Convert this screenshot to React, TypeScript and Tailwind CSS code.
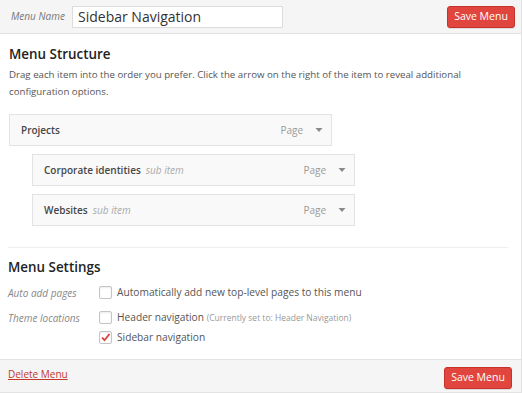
import React from 'react';

const font = { fontFamily: '"Open Sans", "Liberation Sans", sans-serif' };

const Caret: React.FC = () => (
  <svg width="8" height="6" viewBox="0 0 8 6" className="ml-[12px]">
    <path d="M0.5 1 L7.5 1 L4 5 Z" fill="#8a8a8a" />
  </svg>
);

const MenuItem: React.FC<{ title: string; sub?: boolean; className?: string }> = ({ title, sub, className }) => (
  <div className={`flex h-[32px] w-[323px] items-center justify-between border border-[#e3e3e3] bg-[#f9f9f9] pl-[11px] pr-[8px] ${className ?? ''}`}>
    <div className="flex items-baseline">
      <span className="text-[10px] font-semibold text-[#464646]">{title}</span>
      {sub && <span className="ml-[5px] text-[10px] italic text-[#aaa]">sub item</span>}
    </div>
    <div className="flex items-center">
      <span className="text-[10px] text-[#999]">Page</span>
      <Caret />
    </div>
  </div>
);

const Checkbox: React.FC<{ checked?: boolean }> = ({ checked }) => (
  <span className="flex h-[13px] w-[13px] shrink-0 items-center justify-center rounded-[2px] border border-[#c4c4c4] bg-white shadow-[inset_0_1px_2px_rgba(0,0,0,0.08)]">
    {checked && (
      <svg width="11" height="11" viewBox="0 0 11 11">
        <path d="M2 5.5 L4.5 8.2 L9.5 2" fill="none" stroke="#dd3d36" strokeWidth="1.8" />
      </svg>
    )}
  </span>
);

const SaveButton: React.FC = () => (
  <button className="flex h-[22px] w-[68px] items-center justify-center rounded-[3px] border border-[#c9302c] bg-[#e0463d] text-[10.5px] text-white shadow-[0_1px_0_rgba(0,0,0,0.1)]">
    Save Menu
  </button>
);

export default function App() {
  return (
    <div style={font} className="flex h-[396px] w-[522px] flex-col overflow-hidden bg-white">
      <div className="flex h-[34px] shrink-0 items-center border-b border-r border-[#e2e2e2] bg-[#f5f5f5] pl-[11px] pr-[6px]">
        <span className="w-[61px] text-[10px] italic text-[#777]">Menu Name</span>
        <div className="flex h-[22px] w-[211px] items-center border border-[#dcdcdc] bg-white px-[5px] text-[14px] text-[#333]">
          Sidebar Navigation
        </div>
        <div className="ml-auto">
          <SaveButton />
        </div>
      </div>

      <div className="flex flex-1 flex-col border-r border-[#e2e2e2] px-[8px]">
        <h3 className="mt-[10px] pl-[1px] text-[13.4px] font-semibold leading-[20px] text-[#222]">Menu Structure</h3>
        <p className="mt-[2px] pl-[1px] text-[9.7px] leading-[17px] text-[#555]">
          Drag each item into the order you prefer. Click the arrow on the right of the item to reveal additional
          <br />
          configuration options.
        </p>
        <div className="mt-[14px] flex flex-col pl-[1px]">
          <MenuItem title="Projects" />
          <MenuItem title="Corporate identities" sub className="ml-[23px] mt-[8px]" />
          <MenuItem title="Websites" sub className="ml-[23px] mt-[8px]" />
        </div>
        <div className="mt-[21px] mr-[5px] border-t border-[#eee]" />
        <h3 className="mt-[9px] text-[13.4px] font-semibold leading-[20px] text-[#222]">Menu Settings</h3>
        <div className="mt-[7px] flex items-start">
          <span className="w-[91px] pt-[1px] text-[10px] italic leading-[16px] text-[#888]">Auto add pages</span>
          <div className="flex items-center gap-[5px]">
            <Checkbox />
            <span className="text-[10.2px] leading-[16px] text-[#555]">Automatically add new top-level pages to this menu</span>
          </div>
        </div>
        <div className="mt-[8px] flex items-start">
          <span className="w-[91px] pt-[1px] text-[10px] italic leading-[16px] text-[#888]">Theme locations</span>
          <div className="flex flex-col gap-[3px]">
            <div className="flex items-center gap-[5px]">
              <Checkbox />
              <span className="text-[10.2px] leading-[16px] text-[#555]">
                Header navigation <span className="text-[8.5px] text-[#999]">(Currently set to: Header Navigation)</span>
              </span>
            </div>
            <div className="flex items-center gap-[5px]">
              <Checkbox checked />
              <span className="text-[10.2px] leading-[16px] text-[#555]">Sidebar navigation</span>
            </div>
          </div>
        </div>
      </div>

      <div className="flex h-[34px] shrink-0 items-start justify-between border-b border-r border-t border-[#e2e2e2] bg-[#f5f5f5] pl-[8px] pr-[9px] pt-[7px]">
        <a href="#" className="mt-[1px] text-[10px] leading-[12px] text-[#c0392b] underline">Delete Menu</a>
        <SaveButton />
      </div>
      <div className="h-[3px] shrink-0 bg-white" />
    </div>
  );
}
